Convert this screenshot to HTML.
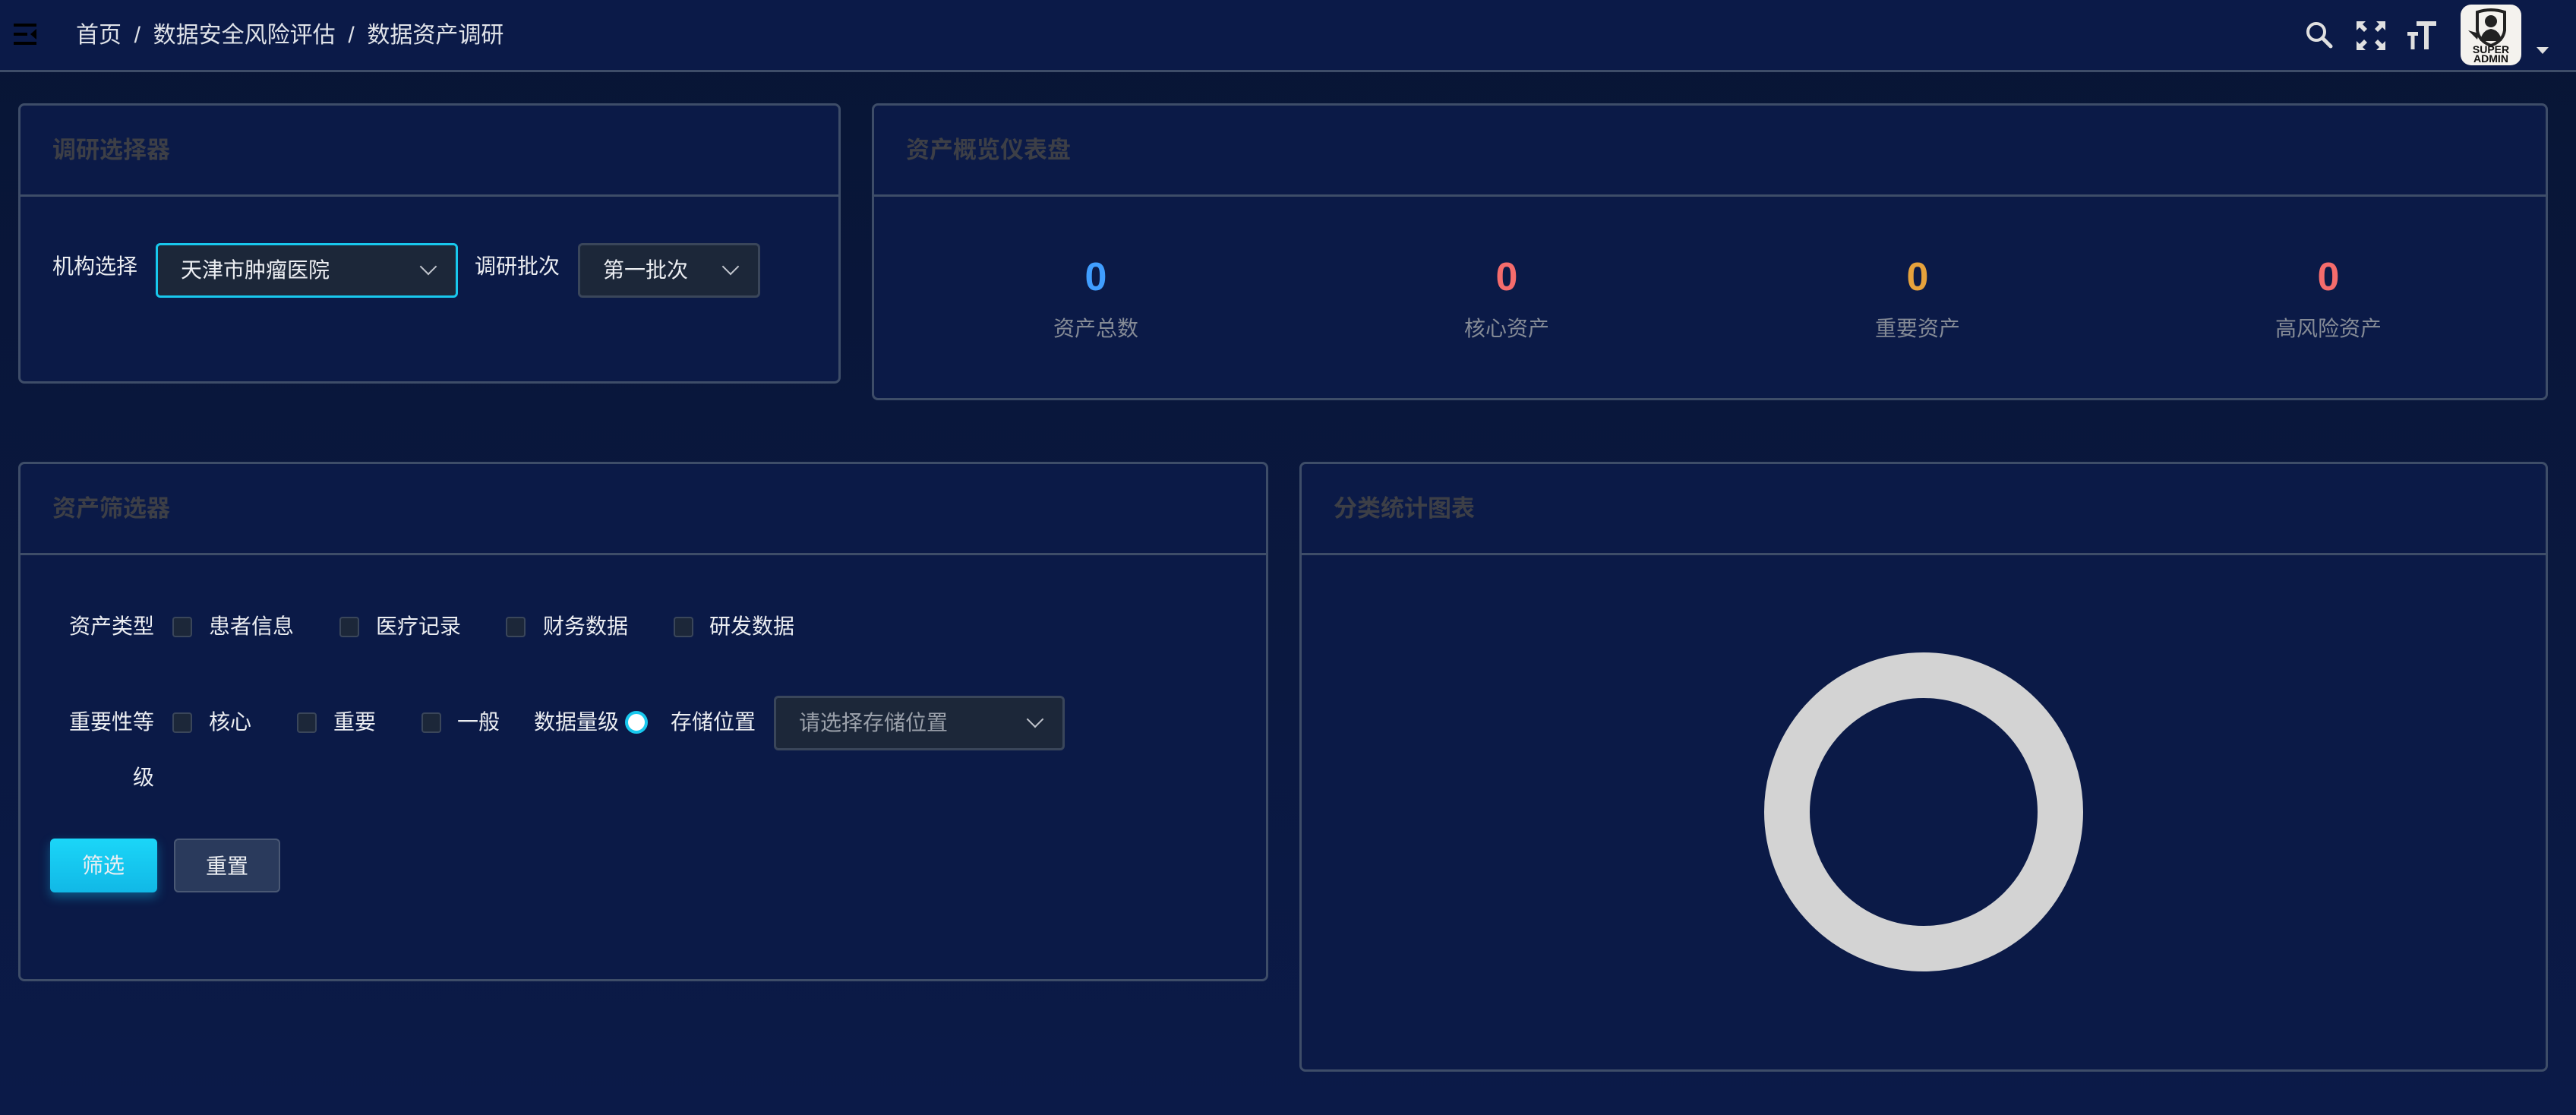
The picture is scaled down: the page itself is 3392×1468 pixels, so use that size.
<!DOCTYPE html>
<html><head><meta charset="utf-8"><style>
*{margin:0;padding:0;box-sizing:border-box}
body{width:3392px;height:1468px;overflow:hidden;background:linear-gradient(180deg,#081535 0%,#0a1840 60%,#0b1a48 100%);font-family:"Liberation Sans","Noto Sans CJK SC",sans-serif;color:#e6e8ee;position:relative}
.hdr{position:absolute;left:0;top:0;width:3392px;height:95px;background:#0b1a48;border-bottom:3px solid #3e4d68}
.abs{position:absolute}
.card{position:absolute;background:#0b1a47;border:3px solid #3e4d68;border-radius:8px}
.card .div{position:absolute;left:0;right:0;height:3px;background:#3e4d68}
.ttl{position:absolute;left:42px;font-size:31px;font-weight:bold;color:#3d3f46}
.lbl{position:absolute;font-size:28px;color:#eceef2;white-space:nowrap}
.sel{position:absolute;background:#1c2739;border:3px solid #3a465a;border-radius:6px}
.chev{position:absolute;width:16px;height:16px;border-right:2px solid #c0c4cc;border-bottom:2px solid #c0c4cc;transform:rotate(45deg)}
.cb{position:absolute;width:26px;height:27px;background:#1c2739;border:2px solid #3a465a;border-radius:4px}
.num{position:absolute;width:300px;text-align:center;font-size:52px;font-weight:bold}
.sub{position:absolute;width:300px;text-align:center;font-size:28px;color:#858b96}
</style></head><body>
<div class="hdr">
 <svg class="abs" style="left:16px;top:28px" width="36" height="36" viewBox="0 0 36 36"><g fill="#000"><rect x="2" y="3" width="30" height="4"/><rect x="2" y="15" width="18" height="4"/><rect x="2" y="27" width="30" height="4"/><path d="M32 10 L24 17 L32 24Z"/></g></svg>
 <div class="lbl" style="left:100px;top:21px;font-size:30px;color:#dfe2e8">首页&nbsp;&nbsp;/&nbsp;&nbsp;数据安全风险评估&nbsp;&nbsp;/&nbsp;&nbsp;数据资产调研</div>
 <svg class="abs" style="left:3034px;top:26px" width="40" height="40" viewBox="0 0 40 40"><circle cx="16" cy="16" r="11" fill="none" stroke="#e0e0e0" stroke-width="4"/><path d="M24 24 L35 35" stroke="#e0e0e0" stroke-width="5" stroke-linecap="round"/></svg>
 <svg class="abs" style="left:3103px;top:28px" width="38" height="38" viewBox="0 0 38 38" fill="#e0e0e0"><path d="M0 0H12L8 4L14 10L10 14L4 8L0 12Z"/><path d="M38 0H26L30 4L24 10L28 14L34 8L38 12Z"/><path d="M0 38H12L8 34L14 28L10 24L4 30L0 26Z"/><path d="M38 38H26L30 34L24 28L28 24L34 30L38 26Z"/></svg>
 <svg class="abs" style="left:3170px;top:26px" width="40" height="40" viewBox="0 0 40 40" fill="#e0e0e0"><rect x="12" y="2" width="26" height="6"/><rect x="22" y="2" width="6" height="37"/><rect x="0" y="16" width="14" height="5"/><rect x="4.5" y="16" width="5" height="23"/></svg>
 <div class="abs" style="left:3240px;top:6px;width:80px;height:80px;background:#f4f2ee;border-radius:14px;overflow:hidden">
  <svg width="80" height="80" viewBox="0 0 80 80"><path d="M22 10 Q40 4 58 10 L58 34 Q56 48 40 54 Q24 48 22 34Z" fill="none" stroke="#222" stroke-width="4"/><circle cx="40" cy="22" r="8" fill="#222"/><path d="M26 48 Q28 34 40 32 Q52 34 54 48Z" fill="#222"/><path d="M10 34 L24 38 L22 46Z" fill="#222"/><text x="40" y="64" font-size="14" font-weight="bold" text-anchor="middle" font-family="Liberation Sans" fill="#111">SUPER</text><text x="40" y="76" font-size="14" font-weight="bold" text-anchor="middle" font-family="Liberation Sans" fill="#111">ADMIN</text></svg>
 </div>
 <svg class="abs" style="left:3340px;top:62px" width="16" height="10"><path d="M0 0H16L8 9Z" fill="#e0e0e0"/></svg>
</div>

<div class="card" style="left:24px;top:136px;width:1083px;height:369px">
 <div class="ttl" style="top:33px">调研选择器</div>
 <div class="div" style="top:117px"></div>
 <div class="lbl" style="left:42px;top:190px">机构选择</div>
 <div class="sel" style="left:178px;top:181px;width:398px;height:72px;border-color:#18c8ee">
  <div class="lbl" style="left:30px;top:11px">天津市肿瘤医院</div><div class="chev" style="right:28px;top:20px"></div></div>
 <div class="lbl" style="left:598px;top:190px">调研批次</div>
 <div class="sel" style="left:734px;top:181px;width:240px;height:72px">
  <div class="lbl" style="left:30px;top:11px">第一批次</div><div class="chev" style="right:28px;top:20px"></div></div>
</div>

<div class="card" style="left:1148px;top:136px;width:2207px;height:391px">
 <div class="ttl" style="top:33px">资产概览仪表盘</div>
 <div class="div" style="top:117px"></div>
 <div class="num" style="left:142px;top:196px;color:#409eff">0</div>
 <div class="num" style="left:683px;top:196px;color:#f56c6c">0</div>
 <div class="num" style="left:1224px;top:196px;color:#e6a23c">0</div>
 <div class="num" style="left:1765px;top:196px;color:#f56c6c">0</div>
 <div class="sub" style="left:142px;top:272px">资产总数</div>
 <div class="sub" style="left:683px;top:272px">核心资产</div>
 <div class="sub" style="left:1224px;top:272px">重要资产</div>
 <div class="sub" style="left:1765px;top:272px">高风险资产</div>
</div>

<div class="card" style="left:24px;top:608px;width:1646px;height:684px">
 <div class="ttl" style="top:33px">资产筛选器</div>
 <div class="div" style="top:117px"></div>
</div>
<div class="lbl" style="left:91px;top:803px">资产类型</div>
<div class="cb" style="left:227px;top:812px"></div><div class="lbl" style="left:275px;top:803px">患者信息</div>
<div class="cb" style="left:447px;top:812px"></div><div class="lbl" style="left:495px;top:803px">医疗记录</div>
<div class="cb" style="left:666px;top:812px"></div><div class="lbl" style="left:715px;top:803px">财务数据</div>
<div class="cb" style="left:887px;top:812px"></div><div class="lbl" style="left:934px;top:803px">研发数据</div>
<div class="lbl" style="left:91px;top:929px">重要性等</div>
<div class="lbl" style="left:175px;top:1002px">级</div>
<div class="cb" style="left:227px;top:938px"></div><div class="lbl" style="left:275px;top:929px">核心</div>
<div class="cb" style="left:391px;top:938px"></div><div class="lbl" style="left:439px;top:929px">重要</div>
<div class="cb" style="left:555px;top:938px"></div><div class="lbl" style="left:602px;top:929px">一般</div>
<div class="lbl" style="left:703px;top:929px">数据量级</div>
<div class="abs" style="left:823px;top:936px;width:30px;height:30px;border-radius:50%;background:#fff;border:4px solid #18c8ee"></div>
<div class="lbl" style="left:883px;top:929px">存储位置</div>
<div class="sel" style="left:1019px;top:916px;width:383px;height:72px">
 <div class="lbl" style="left:30px;top:11px;color:#9aa0aa">请选择存储位置</div><div class="chev" style="right:28px;top:20px"></div></div>
<div class="abs" style="left:66px;top:1104px;width:141px;height:71px;background:linear-gradient(180deg,#1bd6f8,#11b8e6);border-radius:6px;box-shadow:0 6px 14px rgba(17,184,230,.4)"><div class="lbl" style="left:42px;top:14px">筛选</div></div>
<div class="abs" style="left:229px;top:1104px;width:140px;height:71px;background:#2a3a5c;border:2px solid #4a5874;border-radius:6px"><div class="lbl" style="left:40px;top:13px">重置</div></div>

<div class="card" style="left:1711px;top:608px;width:1644px;height:803px">
 <div class="ttl" style="top:33px">分类统计图表</div>
 <div class="div" style="top:117px"></div>
</div>
<svg class="abs" style="left:2313px;top:849px" width="440" height="440"><circle cx="220" cy="220" r="180" fill="none" stroke="#d3d3d3" stroke-width="60"/></svg>
</body></html>
